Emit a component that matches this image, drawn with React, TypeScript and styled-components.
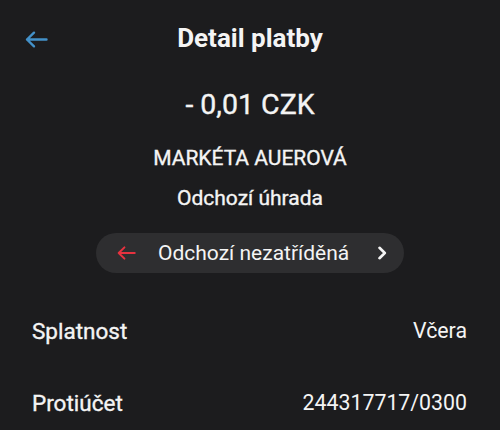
import React from "react";
import styled, { createGlobalStyle } from "styled-components";

const Global = createGlobalStyle`
  html, body { margin: 0; padding: 0; background: #1c1c1e; }
  body { font-family: Roboto, "Noto Sans", "Liberation Sans", sans-serif; color: #f4f4f4; }
  * { box-sizing: border-box; }
`;

const Screen = styled.div`
  width: 500px;
  height: 430px;
  background: #1c1c1e;
  display: flex;
  flex-direction: column;
  align-items: center;
  overflow: hidden;
  & > * { flex-shrink: 0; }
`;

const Header = styled.header`
  width: 100%;
  height: 76px;
  padding-top: 23px;
  display: grid;
  grid-template-columns: 72px 1fr 72px;
  align-items: start;
`;

const BackButton = styled.button`
  background: none;
  border: 0;
  padding: 0;
  margin: 8px 0 0 25px;
  width: 23px;
  height: 17px;
  display: flex;
  align-items: center;
  justify-content: center;
  color: #4391c9;
`;

const Title = styled.h1`
  margin: 0;
  text-align: center;
  font-size: 26px;
  line-height: 30px;
  font-weight: 700;
`;

const Medium = `-webkit-text-stroke: 0.35px currentColor;`;

const Amount = styled.div`
  margin-top: 12px;
  font-size: 28.5px;
  line-height: 34px;
  font-weight: 400;
  ${Medium}
`;

const Name = styled.div`
  margin-top: 23px;
  font-size: 21px;
  line-height: 26px;
  font-weight: 400;
  ${Medium}
`;

const Kind = styled.div`
  margin-top: 14px;
  font-size: 21px;
  line-height: 26px;
  font-weight: 400;
  ${Medium}
`;

const Pill = styled.button`
  margin-top: 22px;
  width: 308px;
  height: 40px;
  border-radius: 20px;
  border: 0;
  background: #2e2e30;
  color: #f4f4f4;
  display: flex;
  align-items: center;
  padding: 0 17px 0 21px;
  font-family: inherit;
`;

const PillLabel = styled.span`
  flex: 1;
  text-align: left;
  margin-left: 22px;
  font-size: 21px;
  line-height: 26px;
  font-weight: 400;
`;

const Rows = styled.div`
  width: 100%;
  margin-top: 22px;
  padding: 0 33px 0 32px;
`;

const Row = styled.div`
  height: 72px;
  display: flex;
  align-items: center;
  justify-content: space-between;
`;

const Label = styled.span`
  font-size: 22.5px;
  line-height: 26px;
  font-weight: 400;
  ${Medium}
`;

const Value = styled.span`
  font-size: 21.3px;
  line-height: 26px;
  font-weight: 400;
`;

const ArrowLeft = ({ color, w, h }: { color: string; w: number; h: number }) => (
  <svg width={w} height={h} viewBox="0 0 23 17" fill="none" stroke={color} strokeWidth="2.4" strokeLinecap="round" strokeLinejoin="round">
    <path d="M21.5 8.5H2M9 1.7 2 8.5l7 6.8" />
  </svg>
);

const Chevron = () => (
  <svg width="10" height="14" viewBox="0 0 10 14" fill="none" stroke="#f4f4f4" strokeWidth="2.6" strokeLinecap="round" strokeLinejoin="round">
    <path d="M2.5 1.8 7.8 7l-5.3 5.2" />
  </svg>
);

export default function App() {
  return (
    <>
      <Global />
      <Screen>
        <Header>
          <BackButton aria-label="Zpět">
            <ArrowLeft color="#4391c9" w={23} h={17} />
          </BackButton>
          <Title>Detail platby</Title>
          <span />
        </Header>
        <Amount>- 0,01 CZK</Amount>
        <Name>MARKÉTA AUEROVÁ</Name>
        <Kind>Odchozí úhrada</Kind>
        <Pill>
          <ArrowLeft color="#e7323f" w={19} h={14} />
          <PillLabel>Odchozí nezatříděná</PillLabel>
          <Chevron />
        </Pill>
        <Rows>
          <Row>
            <Label>Splatnost</Label>
            <Value>Včera</Value>
          </Row>
          <Row>
            <Label>Protiúčet</Label>
            <Value>244317717/0300</Value>
          </Row>
        </Rows>
      </Screen>
    </>
  );
}
